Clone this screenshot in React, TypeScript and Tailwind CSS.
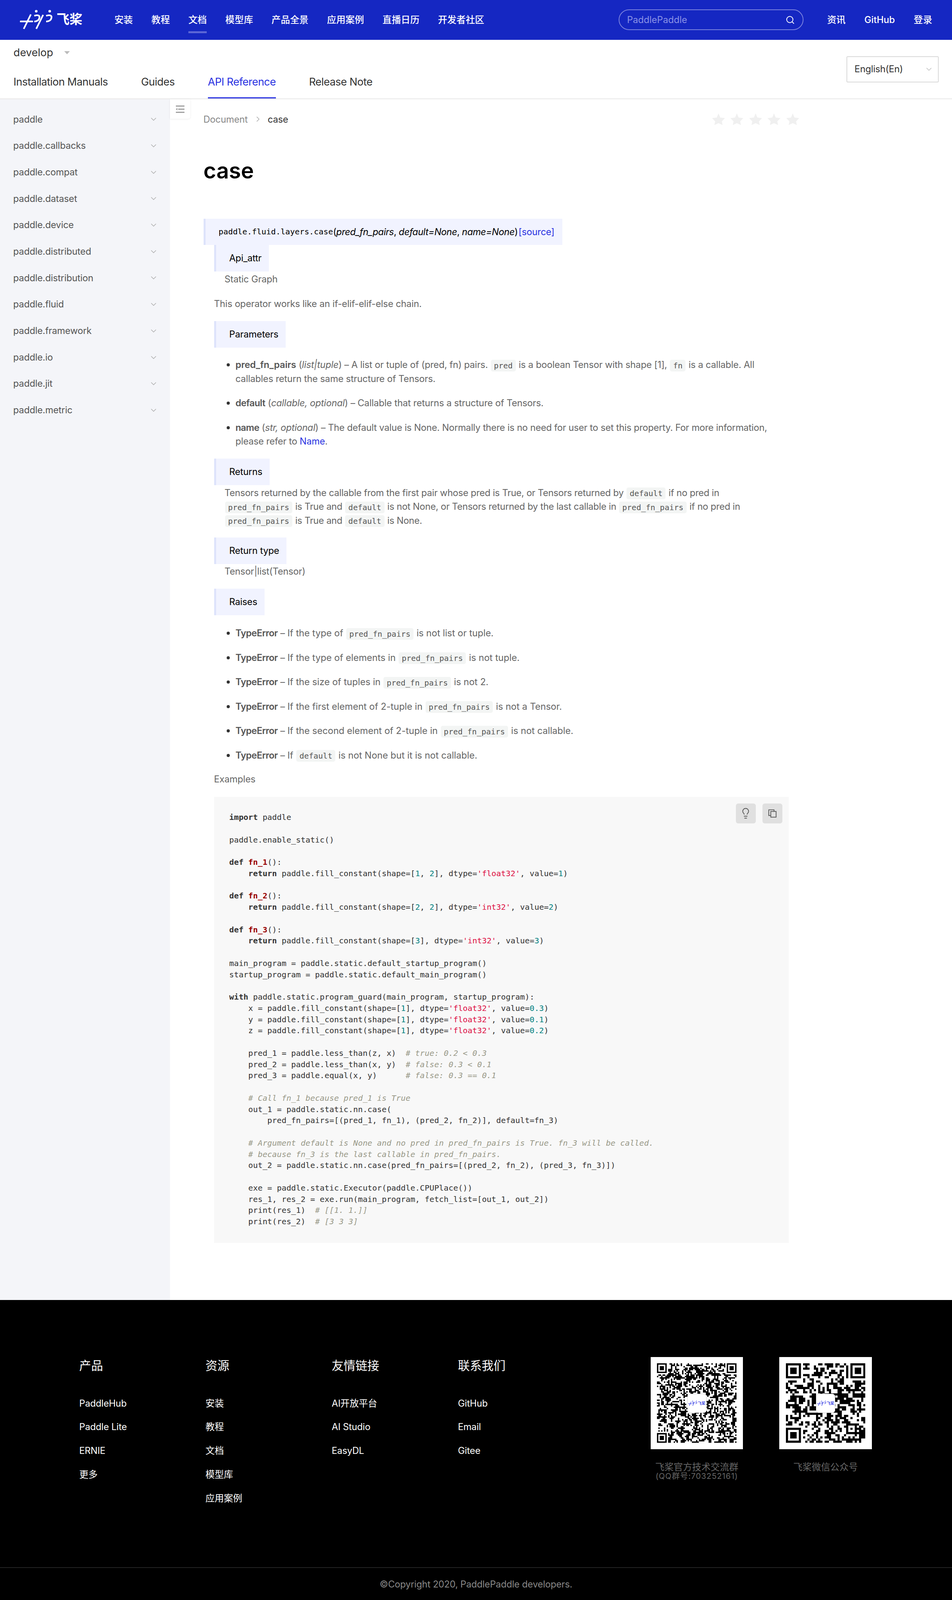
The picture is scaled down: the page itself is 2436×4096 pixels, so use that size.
import React, { ReactNode, useMemo } from "react";
import { Search, Lightbulb } from "lucide-react";

const K = ({ children }: { children: ReactNode }) => <span className="font-bold">{children}</span>;
const F = ({ children }: { children: ReactNode }) => <span className="font-bold text-[#990000]">{children}</span>;
const N = ({ children }: { children: ReactNode }) => <span className="text-[#008080]">{children}</span>;
const S = ({ children }: { children: ReactNode }) => <span className="text-[#dd1144]">{children}</span>;
const C = ({ children }: { children: ReactNode }) => <span className="italic text-[#999988]">{children}</span>;

const fc = (shape: ReactNode, t: string, v: string) => (
  <>
    paddle.fill_constant(shape=[{shape}], dtype=<S>'{t}'</S>, value=<N>{v}</N>)
  </>
);

const codeLines: ReactNode[] = [
  <><K>import</K> paddle</>,
  "",
  "paddle.enable_static()",
  "",
  <><K>def</K> <F>fn_1</F>():</>,
  <>    <K>return</K> {fc(<><N>1</N>, <N>2</N></>, "float32", "1")}</>,
  "",
  <><K>def</K> <F>fn_2</F>():</>,
  <>    <K>return</K> {fc(<><N>2</N>, <N>2</N></>, "int32", "2")}</>,
  "",
  <><K>def</K> <F>fn_3</F>():</>,
  <>    <K>return</K> {fc(<N>3</N>, "int32", "3")}</>,
  "",
  "main_program = paddle.static.default_startup_program()",
  "startup_program = paddle.static.default_main_program()",
  "",
  <><K>with</K> paddle.static.program_guard(main_program, startup_program):</>,
  <>    x = {fc(<N>1</N>, "float32", "0.3")}</>,
  <>    y = {fc(<N>1</N>, "float32", "0.1")}</>,
  <>    z = {fc(<N>1</N>, "float32", "0.2")}</>,
  "",
  <>    pred_1 = paddle.less_than(z, x)  <C># true: 0.2 &lt; 0.3</C></>,
  <>    pred_2 = paddle.less_than(x, y)  <C># false: 0.3 &lt; 0.1</C></>,
  <>    pred_3 = paddle.equal(x, y)      <C># false: 0.3 == 0.1</C></>,
  "",
  <>    <C># Call fn_1 because pred_1 is True</C></>,
  "    out_1 = paddle.static.nn.case(",
  "        pred_fn_pairs=[(pred_1, fn_1), (pred_2, fn_2)], default=fn_3)",
  "",
  <>    <C># Argument default is None and no pred in pred_fn_pairs is True. fn_3 will be called.</C></>,
  <>    <C># because fn_3 is the last callable in pred_fn_pairs.</C></>,
  "    out_2 = paddle.static.nn.case(pred_fn_pairs=[(pred_2, fn_2), (pred_3, fn_3)])",
  "",
  "    exe = paddle.static.Executor(paddle.CPUPlace())",
  "    res_1, res_2 = exe.run(main_program, fetch_list=[out_1, out_2])",
  <>    print(res_1)  <C># [[1. 1.]]</C></>,
  <>    print(res_2)  <C># [3 3 3]</C></>,
];

const Code = ({ children }: { children: ReactNode }) => (
  <code className="inline-block h-[30px] leading-[30px] px-[8px] mx-[1px] rounded-[5px] bg-[#f3f5f4] font-['DejaVu_Sans_Mono',monospace] tracking-normal text-[20px] text-[#555] align-middle">
    {children}
  </code>
);

const Box = ({ children, className = "" }: { children: ReactNode; className?: string }) => (
  <div className={`h-[68px] w-fit flex items-center border-l-[5px] border-[#dde3fb] bg-[#f1f3ff] pl-[34px] pr-[19px] text-black ${className}`}>
    {children}
  </div>
);

const B = ({ children }: { children: ReactNode }) => (
  <b className="font-semibold tracking-[-0.6px] text-[#555]">{children}</b>
);

const Li = ({ children, className = "" }: { children: ReactNode; className?: string }) => (
  <li className={`relative pl-[55px] ${className}`}>
    <span className="absolute left-[32px] top-[14px] w-[8px] h-[8px] rounded-full bg-[#333]" />
    {children}
  </li>
);

const Chevron = ({ className = "" }: { className?: string }) => (
  <svg viewBox="0 0 16 9" className={`w-[14px] h-[8px] ${className}`} fill="none" stroke="currentColor" strokeWidth="1.6">
    <path d="M1 1l7 7 7-7" />
  </svg>
);

const Logo = ({ color, className = "" }: { color: string; className?: string }) => (
  <svg viewBox="58 45 302 185" className={className} fill="none" stroke={color} strokeWidth="15">
    <path d="M62 157H172" strokeLinecap="round" />
    <path d="M158 92L92 226" />
    <path d="M190 105C215 95 240 98 238 118 236 142 218 156 190 158" />
    <path d="M272 96L208 226" />
    <path d="M300 105C325 95 352 98 350 118 348 142 330 156 300 158" />
    <circle cx="208" cy="62" r="12" fill={color} stroke="none" />
    <circle cx="333" cy="62" r="12" fill={color} stroke="none" />
  </svg>
);

function qrPath(n: number, seed: number) {
  let s = seed;
  const rnd = () => {
    s = (s * 1664525 + 1013904223) >>> 0;
    return (s >>> 16) / 65536;
  };
  const g: number[][] = [];
  for (let y = 0; y < n; y++) {
    g.push([]);
    for (let x = 0; x < n; x++) {
      const prevX = x > 0 ? g[y][x - 1] : 0;
      const prevY = y > 0 ? g[y - 1][x] : 0;
      g[y].push(rnd() < 0.38 + 0.14 * prevX + 0.14 * prevY - 0.02 ? 1 : 0);
    }
  }
  const finder = (ox: number, oy: number) => {
    for (let y = -1; y < 8; y++)
      for (let x = -1; x < 8; x++) {
        const px = ox + x, py = oy + y;
        if (px < 0 || py < 0 || px >= n || py >= n) continue;
        const ring = x >= 0 && x <= 6 && y >= 0 && y <= 6 && (x === 0 || x === 6 || y === 0 || y === 6);
        const core = x >= 2 && x <= 4 && y >= 2 && y <= 4;
        g[py][px] = ring || core ? 1 : 0;
      }
  };
  finder(0, 0);
  finder(n - 7, 0);
  finder(0, n - 7);
  for (let y = -2; y <= 2; y++)
    for (let x = -2; x <= 2; x++) {
      const m = Math.max(Math.abs(x), Math.abs(y));
      g[n - 7 + y][n - 7 + x] = m === 1 ? 0 : 1;
    }
  let d = "";
  for (let y = 0; y < n; y++) for (let x = 0; x < n; x++) if (g[y][x]) d += `M${x} ${y}h1v1h-1z`;
  return d;
}

const QR = ({ n, seed }: { n: number; seed: number }) => {
  const d = useMemo(() => qrPath(n, seed), [n, seed]);
  return (
    <div className="relative w-[236.6px] h-[236.6px] bg-white p-[16.5px]">
      <svg viewBox={`0 0 ${n} ${n}`} className="w-full h-full">
        <path d={d} fill="#000" />
      </svg>
      <div className="absolute left-[94px] top-[94px] w-[49px] h-[49px] rounded-[7px] bg-white border border-[#dddddd] shadow flex items-center justify-center gap-[1px]">
        <Logo color="#2932e1" className="w-[23px] h-[14px]" />
        <span className="text-[10px] font-medium text-[#2932e1] leading-none whitespace-nowrap">飞桨</span>
      </div>
    </div>
  );
};

const Star = () => (
  <svg viewBox="0 0 33 30" className="w-[33px] h-[30.4px]" fill="#f0f0f0">
    <path d="M16.5 0L21 10.8 33 12 25 20.5 27 30 16.5 25 6 30 8 20.5 0 12 12 10.8z" />
  </svg>
);

const nav = ["安装", "教程", "文档", "模型库", "产品全景", "应用案例", "直播日历", "开发者社区"];
const side = [
  "paddle", "paddle.callbacks", "paddle.compat", "paddle.dataset", "paddle.device", "paddle.distributed",
  "paddle.distribution", "paddle.fluid", "paddle.framework", "paddle.io", "paddle.jit", "paddle.metric",
];
const footerCols = [
  { t: "产品", l: ["PaddleHub", "Paddle Lite", "ERNIE", "更多"] },
  { t: "资源", l: ["安装", "教程", "文档", "模型库", "应用案例"] },
  { t: "友情链接", l: ["AI开放平台", "AI Studio", "EasyDL"] },
  { t: "联系我们", l: ["GitHub", "Email", "Gitee"] },
];

export default function App() {
  return (
    <div className="w-[2436px] font-['Inter','Noto_Sans_CJK_SC',sans-serif] text-[23.66px] leading-[35.5px] tracking-[-0.2px] text-[#666] bg-white">
      <header className="h-[101.5px] bg-[#1527c2] flex items-center pl-[50.7px] pr-[50.7px] text-white tracking-normal">
        <div className="w-[161px] h-[51px] -mt-[3px] flex items-center gap-[10px]">
          <Logo color="#ffffff" className="w-[84px] h-[51px] shrink-0" />
          <span className="text-[33px] font-bold leading-none whitespace-nowrap">飞桨</span>
        </div>
        <nav className="ml-[81px] flex gap-[47.3px] font-medium">
          {nav.map((n) => (
            <div key={n} className="relative h-[40px] leading-[40px] whitespace-nowrap">
              {n}
              {n === "文档" && <span className="absolute left-0 right-0 bottom-[-14px] h-[5px] bg-[#5c66d6]" />}
            </div>
          ))}
        </nav>
        <div className="ml-auto w-[473px] h-[53px] rounded-full border-2 border-[#7a82de] flex items-center pl-[19px] pr-[20px] text-[#8a92e6] justify-between">
          <span>PaddlePaddle</span>
          <Search className="w-[24px] h-[24px] text-white" strokeWidth={2} />
        </div>
        <div className="ml-[60px] flex gap-[48px] font-medium">
          <span>资讯</span>
          <span>GitHub</span>
          <span>登录</span>
        </div>
      </header>

      <div className="h-[152px] border-b-2 border-[#e8e8e8] flex justify-between pl-[34.6px] pr-[33.8px]">
        <div>
          <div className="h-[67px] flex items-center gap-[28px] text-[27px] text-[#333] tracking-normal">
            <span>develop</span>
            <svg viewBox="0 0 16 9" className="w-[15px] h-[8px]" fill="#bbbbbb"><path d="M0 0h16L8 9z" /></svg>
          </div>
          <div className="flex gap-[85px] text-[27px] tracking-[-0.55px] text-[#333]">
            {["Installation Manuals", "Guides", "API Reference", "Release Note"].map((t) => (
              <div
                key={t}
                className={
                  t === "API Reference"
                    ? "h-[83px] pt-[3px] flex items-center border-b-[3.5px] border-[#2932e1] text-[#2932e1]"
                    : "h-[83px] pt-[3px] flex items-center border-b-[3.5px] border-transparent"
                }
              >
                {t}
              </div>
            ))}
          </div>
        </div>
        <div className="mt-[42px] w-[236.6px] h-[67px] border-2 border-[#d9d9d9] rounded-[3px] flex items-center justify-between pl-[19px] pr-[16px] text-[#333]">
          <span>English(En)</span>
          <Chevron className="text-[#bbb]" />
        </div>
      </div>

      <main className="flex min-h-[3074.5px]">
        <aside className="w-[435px] shrink-0 bg-[#f4f5f9] pt-[18px]">
          {side.map((s) => (
            <div key={s} className="h-[67.7px] flex items-center justify-between pl-[33.8px] pr-[34.7px] text-[#555]">
              <span>{s}</span>
              <Chevron className="text-[#aaa]" />
            </div>
          ))}
        </aside>

        <section className="relative flex-1 pl-[85.5px]">
          <div className="absolute left-0 top-0 w-[51.5px] h-[50.7px] bg-white rounded-br-[6px] shadow-[0_1px_4px_rgba(0,0,0,0.08)] flex items-center justify-center">
            <svg viewBox="0 0 22 22" className="w-[22px] h-[22px]" fill="#a0a0a0">
              <rect x="0" y="2" width="22" height="3" />
              <rect x="6" y="10" width="16" height="3" />
              <rect x="0" y="18" width="22" height="3" />
              <path d="M0 11.5L4 8v7z" />
            </svg>
          </div>

          <div className="w-[1524px] pt-[36.5px] flex justify-between items-center h-[67px]">
            <div className="flex items-center text-[#888]">
              <span>Document</span>
              <svg viewBox="0 0 8 14" className="w-[8px] h-[14px] ml-[22px] mr-[21px]" fill="none" stroke="#999" strokeWidth="1.2"><path d="M1 1l6 6-6 6" /></svg>
              <span className="text-[#333]">case</span>
            </div>
            <div className="flex gap-[14.5px]">
              {[0, 1, 2, 3, 4].map((i) => <Star key={i} />)}
            </div>
          </div>

          <h1 className="mt-[76px] h-[80px] leading-[80px] text-[56px] font-semibold tracking-normal text-black">case</h1>

          <div className="mt-[83px] h-[67.5px] w-fit flex items-center border-l-[5px] border-[#dde3fb] bg-[#f1f3ff] pl-[33.8px] pr-[20.7px] text-black">
            <span className="font-['DejaVu_Sans_Mono',monospace] tracking-normal text-[20.28px]">paddle.fluid.layers.case</span>
            <span className="tracking-[-0.4px]">(<em>pred_fn_pairs</em>, <em>default=None</em>, <em>name=None</em>)</span>
            <span className="ml-[2px] text-[#2932e1]">[source]</span>
          </div>

          <div className="ml-[27px] w-[1470px]">
            <Box>Api_attr</Box>
            <p className="mt-[2px] pl-[27px]">Static Graph</p>
            <p className="mt-[27px]">This operator works like an if-elif-elif-else chain.</p>
            <Box className="mt-[27px]">Parameters</Box>
            <ul className="mt-[26px]">
              <Li>
                <b className="font-semibold tracking-[-0.1px] text-[#555]">pred_fn_pairs</b> (<em>list|tuple</em>) – A list or tuple of (pred, fn) pairs. <Code>pred</Code> is a boolean Tensor with shape [1], <Code>fn</Code> is a callable. All<br />
                callables return the same structure of Tensors.
              </Li>
              <Li className="mt-[27px]">
                <B>default</B> (<em>callable, optional</em>) – Callable that returns a structure of Tensors.
              </Li>
              <Li className="mt-[27px] tracking-[-0.26px]">
                <B>name</B> (<em>str, optional</em>) – The default value is None. Normally there is no need for user to set this property. For more information,<br />
                please refer to <span className="text-[#2932e1]">Name</span>.
              </Li>
            </ul>
            <Box className="mt-[26px]">Returns</Box>
            <p className="mt-[2px] pl-[27px] tracking-[-0.3px]">
              Tensors returned by the callable from the first pair whose pred is True, or Tensors returned by <Code>default</Code> if no pred in<br />
              <Code>pred_fn_pairs</Code> is True and <Code>default</Code> is not None, or Tensors returned by the last callable in <Code>pred_fn_pairs</Code> if no pred in<br />
              <Code>pred_fn_pairs</Code> is True and <Code>default</Code> is None.
            </p>
            <Box className="mt-[26px]">Return type</Box>
            <p className="mt-[1px] pl-[27px]">Tensor|list(Tensor)</p>
            <Box className="mt-[26.5px]">Raises</Box>
            <ul className="mt-[28px] flex flex-col gap-[27px] tracking-[-0.05px]">
              <Li><B>TypeError</B> – If the type of <Code>pred_fn_pairs</Code> is not list or tuple.</Li>
              <Li><B>TypeError</B> – If the type of elements in <Code>pred_fn_pairs</Code> is not tuple.</Li>
              <Li><B>TypeError</B> – If the size of tuples in <Code>pred_fn_pairs</Code> is not 2.</Li>
              <Li><B>TypeError</B> – If the first element of 2-tuple in <Code>pred_fn_pairs</Code> is not a Tensor.</Li>
              <Li><B>TypeError</B> – If the second element of 2-tuple in <Code>pred_fn_pairs</Code> is not callable.</Li>
              <Li><B>TypeError</B> – If <Code>default</Code> is not None but it is not callable.</Li>
            </ul>
            <p className="mt-[26px]">Examples</p>
            <div className="relative mt-[27.5px] h-[1142px] bg-[#f8f8f8] pt-[38px] pl-[39px] font-['DejaVu_Sans_Mono',monospace] tracking-normal text-[20.28px] leading-[28.76px] text-[#333] whitespace-pre">
              {codeLines.map((l, i) => (
                <div key={i} className="h-[28.76px]">{l}</div>
              ))}
              <div className="absolute right-[16px] top-[17px] flex gap-[17px]">
                <div className="w-[50.7px] h-[50.7px] rounded-[6px] bg-[#e0e0e0] flex items-center justify-center">
                  <Lightbulb className="w-[30px] h-[30px] text-[#555]" strokeWidth={1.5} />
                </div>
                <div className="w-[50.7px] h-[50.7px] rounded-[6px] bg-[#e0e0e0] flex items-center justify-center">
                  <svg viewBox="0 0 24 24" className="w-[25px] h-[25px]" fill="none" stroke="#555" strokeWidth="1.8">
                    <rect x="8" y="7" width="13" height="14" />
                    <path d="M16 7V3H3v14h5" />
                  </svg>
                </div>
              </div>
            </div>
          </div>
        </section>
      </main>

      <footer className="h-[768.5px] bg-black">
        <div className="h-[684px] flex pl-[202.8px] pt-[145.6px]">
          <div className="flex">
            {footerCols.map((c) => (
              <div key={c.t} className="w-[323px]">
                <div className="h-[44px] leading-[44px] text-[30.4px] tracking-normal text-white">{c.t}</div>
                <div className="mt-[45px]">
                  {c.l.map((t) => (
                    <div key={t} className="h-[60.8px] leading-[60.8px] text-white">{t}</div>
                  ))}
                </div>
              </div>
            ))}
          </div>
          <div className="ml-[169.8px] flex gap-[93px]">
            <div className="w-[236.6px]">
              <QR n={57} seed={20200} />
              <div className="mt-[34px] text-center text-[#666] leading-[23px] tracking-normal">飞桨官方技术交流群</div>
              <div className="text-center text-[#666] text-[20.3px] leading-[23px] tracking-[1px]">(QQ群号:703252161)</div>
            </div>
            <div className="w-[236.6px]">
              <QR n={37} seed={4711} />
              <div className="mt-[34px] text-center text-[#666] leading-[23px] tracking-normal">飞桨微信公众号</div>
            </div>
          </div>
        </div>
        <div className="h-[84.5px] border-t-2 border-[#242424] flex items-center justify-center text-[#888]">
          ©Copyright 2020, PaddlePaddle developers.
        </div>
      </footer>
    </div>
  );
}
